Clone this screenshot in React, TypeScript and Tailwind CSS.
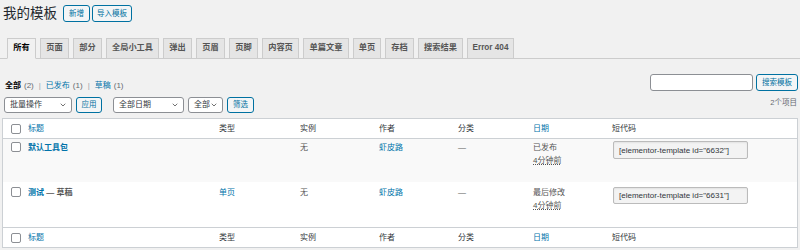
import { ChevronDown } from "lucide-react";

const tabs = [
  { label: "所有", w: "w-[29px]" },
  { label: "页面", w: "w-[29px]" },
  { label: "部分", w: "w-[29px]" },
  { label: "全局小工具", w: "w-[53px]" },
  { label: "弹出", w: "w-[29px]" },
  { label: "页眉", w: "w-[29px]" },
  { label: "页脚", w: "w-[29px]" },
  { label: "内容页", w: "w-[37px]" },
  { label: "单篇文章", w: "w-[46px]" },
  { label: "单页", w: "w-[28px]" },
  { label: "存档", w: "w-[29px]" },
  { label: "搜索结果", w: "w-[45px]" },
  { label: "Error 404", w: "w-[47px]" },
];

const cols = "grid grid-cols-[25px_191px_81px_79px_79px_75px_79px_1fr]";

function Checkbox() {
  return (
    <span className="block w-[10px] h-[10px] rounded-[2px] border border-[#8c8f94] bg-white" />
  );
}

function WpButton({ label, w }: { label: string; w: string }) {
  return (
    <button
      className={`${w} h-[17px] flex items-center justify-center rounded-[3px] border border-[#0071a1] bg-[#f3f5f6] text-[#0071a1] text-[7.5px] leading-none`}
    >
      {label}
    </button>
  );
}

function Select({ label, w }: { label: string; w: string }) {
  return (
    <div
      className={`${w} h-[16px] flex items-center justify-between pl-[5px] pr-[4px] rounded-[3px] border border-[#8c8f94] bg-white text-[#32373c] text-[8px]`}
    >
      <span>{label}</span>
      <ChevronDown className="w-[8px] h-[8px] text-[#555]" strokeWidth={2.5} />
    </div>
  );
}

function HeaderRow({ top }: { top: boolean }) {
  return (
    <div
      className={`${cols} h-[20px] items-center text-[8px] leading-[12px] text-[#32373c] ${
        top ? "border-b border-[#ccd0d4]" : "border-t border-[#ccd0d4]"
      }`}
    >
      <div className="pl-[8px]">
        <Checkbox />
      </div>
      <a className="text-[#0073aa]">标题</a>
      <span>类型</span>
      <span>实例</span>
      <span>作者</span>
      <span>分类</span>
      <a className="text-[#0073aa]">日期</a>
      <span>短代码</span>
    </div>
  );
}

export default function App() {
  return (
    <div className="w-[800px] h-[250px] overflow-hidden bg-[#f1f1f1] font-['Liberation_Sans','Noto_Sans_CJK_SC',sans-serif] text-[#32373c]">
      {/* title */}
      <div className="flex items-center pl-[3px] pt-[5px]">
        <h1 className="text-[13.5px] leading-[17px] text-[#23282d]">我的模板</h1>
        <div className="flex gap-[2px] ml-[6px]">
          <WpButton label="新增" w="w-[27px]" />
          <WpButton label="导入模板" w="w-[40px]" />
        </div>
      </div>

      {/* tabs */}
      <div className="mt-[16px] flex gap-[4px] pl-[7px] border-b border-[#ccc]">
        {tabs.map((t, i) => (
          <div
            key={t.label}
            className={`${t.w} h-[21px] -mb-px flex items-center justify-center whitespace-nowrap border border-[#ccc] text-[8.2px] font-semibold ${
              i === 0
                ? "bg-[#f1f1f1] border-b-[#f1f1f1] text-black"
                : "bg-[#e5e5e5] text-[#555]"
            }`}
          >
            {t.label}
          </div>
        ))}
      </div>

      {/* status + search */}
      <div className="mt-[15px] flex items-start justify-between pl-[5px] pr-[2px]">
        <div className="mt-[6px] flex items-center text-[8px] leading-[12px] text-[#646970]">
          <span className="font-bold text-black">全部</span>
          <span className="ml-[3px]">(2)</span>
          <span className="mx-[5px] text-[#a0a5aa]">|</span>
          <a className="text-[#0073aa]">已发布</a>
          <span className="ml-[3px]">(1)</span>
          <span className="mx-[5px] text-[#a0a5aa]">|</span>
          <a className="text-[#0073aa]">草稿</a>
          <span className="ml-[3px]">(1)</span>
        </div>
        <div className="flex gap-[3px]">
          <div className="w-[103px] h-[17px] rounded-[3px] border border-[#8c8f94] bg-white" />
          <WpButton label="搜索模板" w="w-[42px]" />
        </div>
      </div>

      {/* filters */}
      <div className="mt-[5px] flex items-start justify-between pl-[4px] pr-[3px]">
        <div className="flex items-center">
          <Select label="批量操作" w="w-[68px]" />
          <div className="ml-[4px]">
            <WpButton label="应用" w="w-[26px] !h-[16px]" />
          </div>
          <div className="ml-[11px]">
            <Select label="全部日期" w="w-[71px]" />
          </div>
          <div className="ml-[4px]">
            <Select label="全部" w="w-[35px]" />
          </div>
          <div className="ml-[4px]">
            <WpButton label="筛选" w="w-[27px] !h-[16px]" />
          </div>
        </div>
        <span className="text-[7.5px] leading-[12px] text-[#646970]">2个项目</span>
      </div>

      {/* table */}
      <div className="mt-[5px] mx-[2px] border border-[#ccd0d4] bg-white">
        <HeaderRow top />

        <div className={`${cols} h-[43px] bg-[#f9f9f9] pt-[2px] text-[8px] leading-[13px]`}>
          <div className="pl-[8px] pt-[1px]">
            <Checkbox />
          </div>
          <a className="font-bold text-[#0073aa]">默认工具包</a>
          <span />
          <span className="text-[#555]">无</span>
          <a className="text-[#0073aa]">虾皮路</a>
          <span className="text-[#555]">—</span>
          <div className="text-[#555]">
            <div>已发布</div>
            <div className="underline decoration-dotted">4分钟前</div>
          </div>
          <div className="pl-[1px]">
            <div className="w-[135px] h-[18px] flex items-center pl-[5px] rounded-[2px] border border-[#bbb] bg-[#f3f3f3] shadow-[inset_0_1px_2px_rgba(0,0,0,0.07)] text-[#32373c] whitespace-nowrap">
              [elementor-template id="6632"]
            </div>
          </div>
        </div>

        <div className={`${cols} h-[45px] pt-[4px] text-[8px] leading-[13px]`}>
          <div className="pl-[8px] pt-[1px]">
            <Checkbox />
          </div>
          <div className="font-bold">
            <a className="text-[#0073aa]">测试</a>
            <span className="text-[#555]"> — 草稿</span>
          </div>
          <a className="text-[#0073aa]">单页</a>
          <span className="text-[#555]">无</span>
          <a className="text-[#0073aa]">虾皮路</a>
          <span className="text-[#555]">—</span>
          <div className="text-[#555]">
            <div>最后修改</div>
            <div className="underline decoration-dotted">4分钟前</div>
          </div>
          <div className="pl-[1px] pt-[1px]">
            <div className="w-[135px] h-[17px] flex items-center pl-[5px] rounded-[2px] border border-[#bbb] bg-[#f3f3f3] shadow-[inset_0_1px_2px_rgba(0,0,0,0.07)] text-[#32373c] whitespace-nowrap">
              [elementor-template id="6631"]
            </div>
          </div>
        </div>

        <HeaderRow top={false} />
      </div>
    </div>
  );
}
